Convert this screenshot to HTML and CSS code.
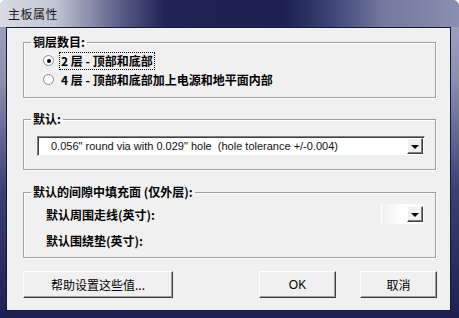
FILE: index.html
```html
<!DOCTYPE html>
<html lang="zh-CN">

<head>
    <meta charset="UTF-8">
    <meta name="viewport" content="width=device-width, initial-scale=1.0">
    <title>主板属性</title>
    <link rel="stylesheet" href="styles.css">
</head>

<body>
    <div class="window">
        <div class="titlebar">
            <span class="title">主板属性</span>
        </div>

        <div class="dialog">
            <fieldset class="group group-layers">
                <legend>铜层数目:</legend>
                <div class="group-body">
                    <div class="radio-row">
                        <span class="radio checked"></span>
                        <span class="radio-label focused">2 层 - 顶部和底部</span>
                    </div>
                    <div class="radio-row">
                        <span class="radio"></span>
                        <span class="radio-label">4 层 - 顶部和底部加上电源和地平面内部</span>
                    </div>
                </div>
            </fieldset>

            <fieldset class="group group-default">
                <legend>默认:</legend>
                <div class="group-body">
                    <div class="combo">
                        <span class="combo-text">0.056" round via with 0.029" hole&nbsp;&nbsp;(hole tolerance +/-0.004)</span>
                        <span class="combo-button"><span class="arrow"></span></span>
                    </div>
                </div>
            </fieldset>

            <fieldset class="group group-fill">
                <legend>默认的间隙中填充面 (仅外层):</legend>
                <div class="group-body">
                    <div class="fill-row">
                        <span class="fill-label">默认周围走线(英寸):</span>
                        <div class="combo combo-faded">
                            <span class="combo-button"><span class="arrow"></span></span>
                        </div>
                    </div>
                    <div class="fill-row second">
                        <span class="fill-label">默认围绕垫(英寸):</span>
                    </div>
                </div>
            </fieldset>

            <div class="buttons">
                <button class="btn btn-help">帮助设置这些值...</button>
                <button class="btn btn-ok">OK</button>
                <button class="btn btn-cancel">取消</button>
            </div>
        </div>
    </div>
</body>

</html>
```

FILE: styles.css
```css
html,
body {
    margin: 0;
    padding: 0;
}

body {
    width: 459px;
    height: 318px;
    overflow: hidden;
    font-family: "Noto Sans CJK SC", "Liberation Sans", sans-serif;
    font-size: 12px;
    color: #000;
}

.window {
    width: 459px;
    height: 318px;
    display: flex;
    flex-direction: column;
    border-radius: 6px 6px 0 0;
    background: linear-gradient(to bottom, #a3a7c0 0%, #8b90b0 25%, #3a4070 60%, #1d2151 100%);
}

.titlebar {
    height: 27px;
    flex: none;
    display: flex;
    align-items: center;
    padding-left: 8px;
    border-radius: 6px 6px 0 0;
    background: linear-gradient(to right, #d9dae3 0%, #c3c5d4 12%, #5a5f88 26%, #1e2354 36%, #1b2050 62%, #3d4374 72%, #747aa0 84%, #8a8fb0 100%);
}

.title {
    font-size: 12px;
    line-height: 14px;
    color: #1a1a1a;
    letter-spacing: 0.5px;
}

.dialog {
    flex: 1;
    margin: 0 8px 7px 6px;
    border: 1px solid #13173a;
    background-color: #f0f0f0;
    padding: 7px 14px 0 16px;
    display: flex;
    flex-direction: column;
}

.group {
    margin: 0;
    padding: 0;
    border: 1px solid #a0a0a0;
    box-shadow: 1px 1px 0 #fff, inset 1px 1px 0 #fff;
    min-width: 0;
}

.group legend {
    margin-left: 7px;
    padding: 0 2px;
    font-weight: bold;
    line-height: 14px;
}

.group-layers .group-body {
    padding: 2px 0 8px 19px;
}

.radio-row {
    height: 19px;
    display: flex;
    align-items: center;
}

.radio {
    width: 9px;
    height: 9px;
    border: 1px solid #8a8a8a;
    border-radius: 50%;
    background-color: #fff;
    margin-right: 5px;
    display: flex;
    align-items: center;
    justify-content: center;
}

.radio.checked::after {
    content: "";
    width: 4px;
    height: 4px;
    border-radius: 50%;
    background-color: #000;
}

.radio-label {
    font-weight: bold;
    padding: 1px 1px;
    border: 1px dotted transparent;
    line-height: 14px;
}

.radio-label.focused {
    border-color: #000;
}

.group-default {
    margin-top: 14px;
}

.group-default .group-body {
    padding: 10px 10px 13px 13px;
}

.combo {
    height: 20px;
    box-sizing: border-box;
    display: flex;
    align-items: center;
    background-color: #fff;
    border: 1px solid;
    border-color: #808080 #f0f0f0 #f0f0f0 #808080;
    box-shadow: inset 1px 1px 0 #404040;
}

.combo-text {
    flex: 1;
    padding-left: 13px;
    font-family: "Liberation Sans", sans-serif;
    font-size: 11px;
    color: #111;
    white-space: nowrap;
}

.combo-button {
    width: 16px;
    height: 16px;
    margin: 1px 1px 1px 0;
    box-sizing: border-box;
    background-color: #f0f0f0;
    border: 1px solid;
    border-color: #fff #404040 #404040 #fff;
    box-shadow: inset -1px -1px 0 #808080;
    display: flex;
    align-items: center;
    justify-content: center;
}

.arrow {
    width: 0;
    height: 0;
    border-left: 4px solid transparent;
    border-right: 4px solid transparent;
    border-top: 4px solid #000;
    margin-top: 1px;
}

.group-fill {
    margin-top: 15px;
}

.group-fill .group-body {
    padding: 6px 10px 8px 22px;
}

.fill-row {
    height: 18px;
    display: flex;
    align-items: center;
}

.fill-row.second {
    margin-top: 8px;
}

.fill-label {
    font-weight: bold;
    flex: 1;
}

.combo-faded {
    width: 44px;
    border-color: transparent #f0f0f0 transparent transparent;
    box-shadow: none;
    justify-content: flex-end;
    background: linear-gradient(to right, #f0f0f0 0%, #fff 45%, #fff 100%);
}

.buttons {
    display: flex;
    margin-top: 13px;
    margin-right: -1px;
}

.btn {
    height: 27px;
    box-sizing: border-box;
    background-color: #f0f0f0;
    border: 1px solid;
    border-color: #fff #404040 #404040 #fff;
    box-shadow: inset -1px -1px 0 #a0a0a0;
    font-family: "Noto Sans CJK SC", "Liberation Sans", sans-serif;
    font-size: 12px;
    font-weight: normal;
    color: #000;
    padding: 0;
}

.btn-help {
    width: 150px;
}

.btn-ok {
    width: 77px;
    margin-left: auto;
    font-family: "Liberation Sans", sans-serif;
}

.btn-cancel {
    width: 77px;
    margin-left: 24px;
}
```
